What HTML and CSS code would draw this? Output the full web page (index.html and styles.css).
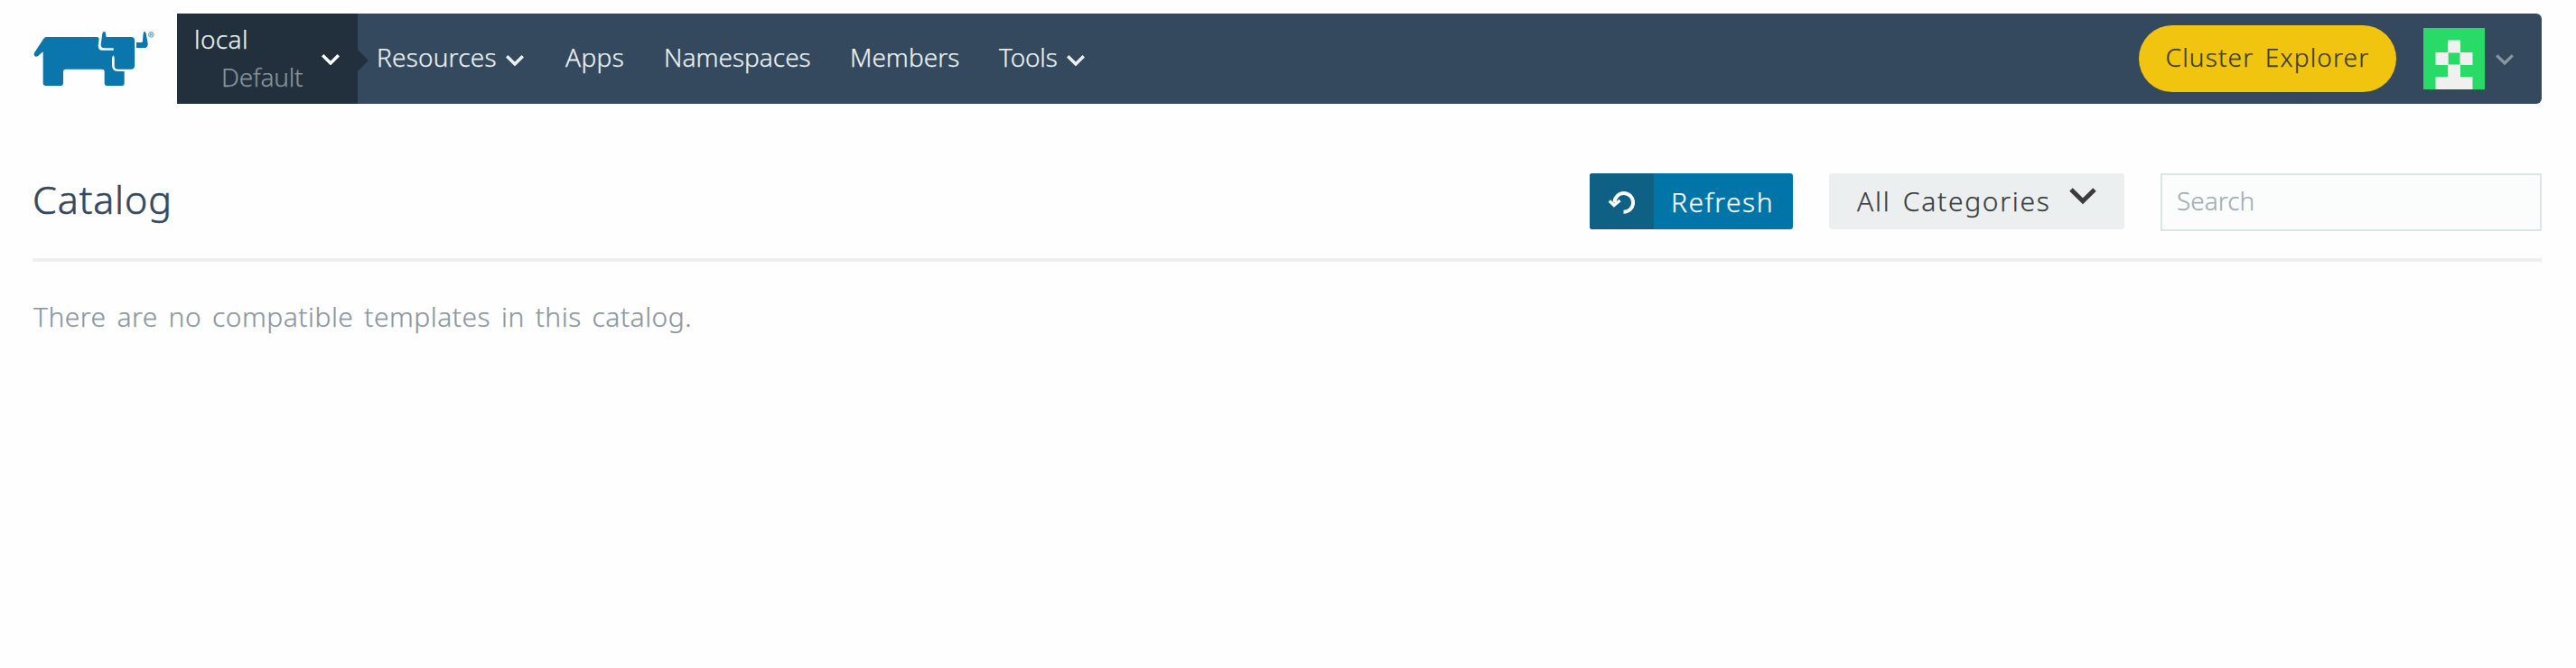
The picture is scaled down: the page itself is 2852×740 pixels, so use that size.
FILE: index.html
```html
<!DOCTYPE html>
<html lang="en">
<head>
<meta charset="utf-8">
<title>Catalog</title>
<link rel="stylesheet" href="styles.css">
</head>
<body>
<header class="top">
  <a class="logo">
    <svg viewBox="48 99 408 189" width="136" height="63" fill="#0b76ab">
      <path d="M94 123H262Q269 123 269 130L266 152Q266 167 280 167H318V182Q312 186 312 194V216Q312 237 331 237H353V276Q353 285 344 285H296Q287 285 287 276V238Q287 230 279 230H158Q150 230 150 238V276Q150 285 141 285H92Q83 285 83 276V172L66 186Q60 191 55 186Q50 181 55 174L84 130Q89 123 94 123Z"/>
      <path d="M275 148L280 112Q281 105 286 105Q291 105 291 112L293 123H376Q387 123 387 134V218Q387 230 375 230H332Q320 230 320 218V192Q320 188 317 185V160H286Q275 160 275 148Z"/>
      <path d="M393 141H410Q414 141 414 136L416 110Q417 105 420 105Q424 105 425 111L431 145Q432 159 420 159H393Z"/>
      <circle cx="442" cy="115" r="8.5" fill="none" stroke="#0b76ab" stroke-width="2"/>
      <path d="M439 120V111H443Q446 111 446 113.500Q446 116 443 116H439M443 116L446 120" fill="none" stroke="#0b76ab" stroke-width="1.800"/>
    </svg>
  </a>
  <nav class="bar">
    <div class="scope">
      <div class="scope-names"><span class="cluster">local</span><span class="project">Default</span></div>
      <svg class="chev" viewBox="0 0 20 12" width="20" height="12"><path d="M1.200 1.300L10 10L18.800 1.300"/></svg>
    </div>
    <div class="links">
      <a class="link resources">Resources<svg class="chev" viewBox="0 0 20 12" width="20" height="12"><path d="M1.200 1.300L10 10L18.800 1.300"/></svg></a>
      <a class="link apps">Apps</a>
      <a class="link namespaces">Namespaces</a>
      <a class="link members">Members</a>
      <a class="link tools">Tools<svg class="chev" viewBox="0 0 20 12" width="20" height="12"><path d="M1.200 1.300L10 10L18.800 1.300"/></svg></a>
    </div>
    <div class="account">
      <a class="explorer">Cluster Explorer</a>
      <svg class="avatar" viewBox="0 0 68 68" width="68" height="68"><path fill="#28db67" d="M0 0H68V68H0Z"/><path fill="#f0f0f0" d="M27.200 13.500H41V27H54.500V41H41V54H54.500V68H13.500V54H27.200V41H13.500V27H27.200ZM27.700 27.500V40.500H40.500V27.500Z" fill-rule="evenodd"/></svg>
      <svg class="chev muted" viewBox="0 0 20 12" width="20" height="12"><path d="M1.200 1.300L10 10L18.800 1.300"/></svg>
    </div>
  </nav>
</header>
<main>
  <section class="heading">
    <h1>Catalog</h1>
    <div class="actions">
      <button class="refresh"><span class="refresh-icon"><svg viewBox="0 0 30 26" width="30" height="26" fill="none" stroke="#fff"><path stroke-width="4" d="M7.500 12.500A10.300 10.300 0 1 1 17.500 22.700"/><path stroke-width="3.400" d="M1.800 10.500L7 15.500L13.500 10"/></svg></span><span class="refresh-label">Refresh</span></button>
      <button class="categories">All Categories<svg viewBox="0 0 30 19" width="30" height="19" fill="none" stroke="#3a3c3d" stroke-width="5"><path d="M2 2L15 14.700L28 2"/></svg></button>
      <input class="search" type="text" placeholder="Search">
    </div>
  </section>
  <p class="empty">There are no compatible templates in this catalog.</p>
</main>
</body>
</html>
```
FILE: styles.css
```css
*{box-sizing:border-box}
body{margin:0;padding:15px 38px 0 36px;background:#fefefe;font-family:"Noto Sans","Open Sans",sans-serif;font-weight:300;font-size:28px;-webkit-text-stroke:.25px currentColor}
.top{display:flex;height:100px}
.logo{width:160px;padding-top:18px}
.logo svg{display:block}
.bar{flex:1;display:flex;background:#34495e;border-radius:0 6px 6px 0;color:#ecf0f1}
.chev{fill:none;stroke:currentColor;stroke-width:3.500;flex:none}
.scope{position:relative;width:200px;background:#22303d;display:flex;justify-content:space-between;align-items:flex-start;padding:7px 20px 0 19px}
.scope::after{content:"";position:absolute;left:200px;top:40px;border:12px solid transparent;border-left-color:#22303d;border-right:0}
.scope .chev{margin-top:38px;color:#fff}
.scope-names{display:flex;flex-direction:column;line-height:42px}
.cluster{letter-spacing:.4px}
.project{padding-left:30px;color:#87939a;letter-spacing:-.2px}
.links{display:flex;line-height:97px}
.link{white-space:nowrap}
.link .chev{margin-left:10px;vertical-align:1px}
.resources{width:209px;margin-left:21px;letter-spacing:.2px}
.apps{width:109px;letter-spacing:.4px}
.namespaces{width:206px;letter-spacing:0}
.members{width:165px}
.tools{letter-spacing:-.2px}
.account{margin-left:auto;display:flex;align-items:flex-start;padding-right:31px}
.explorer{width:285px;height:74px;margin:13px 30px 0 0;border-radius:37px;background:#f1c40f;color:#3a3c3d;text-align:center;line-height:71px;letter-spacing:1.150px;word-spacing:4px}
.avatar{margin-top:16px}
.muted{margin:45px 0 0 12px;color:#8b979e;stroke-width:3.200}
.heading{display:flex;justify-content:space-between;height:175px;padding-top:77px;border-bottom:4px solid #ecf0f0}
h1{margin:0;color:#34495e;font-size:43px;font-weight:300;line-height:57px;letter-spacing:.900px;-webkit-text-stroke-width:.6px}
.actions{display:flex;align-items:flex-start}
button{font:inherit;font-size:30px;border:0;border-radius:3px;height:62px;padding:0}
.refresh{display:flex;width:225px;overflow:hidden;background:#0275a8;color:#fff;letter-spacing:1.500px;line-height:64px}
.refresh-icon{width:71px;height:62px;background:#0e6084;padding:20px 0 0 20px}
.refresh-icon svg{display:block}
.refresh-label{padding-left:19px}
.categories{display:flex;align-items:flex-start;justify-content:space-between;width:327px;margin:0 40px;padding:0 31px;background:#ebeff0;color:#3a3c3d;line-height:61px;letter-spacing:1.700px;word-spacing:4px}
.categories svg{margin-top:16px}
.search{width:422px;height:64px;border:2px solid #dce5e6;background:#fbfdfc;padding:0 16px 5px;font:inherit}
.search::placeholder{color:#a2adb3;opacity:1}
.empty{margin:0;padding:40px 0 0 1px;font-size:30px;line-height:42px;color:#8b979e;letter-spacing:.480px;word-spacing:3.600px}
```
